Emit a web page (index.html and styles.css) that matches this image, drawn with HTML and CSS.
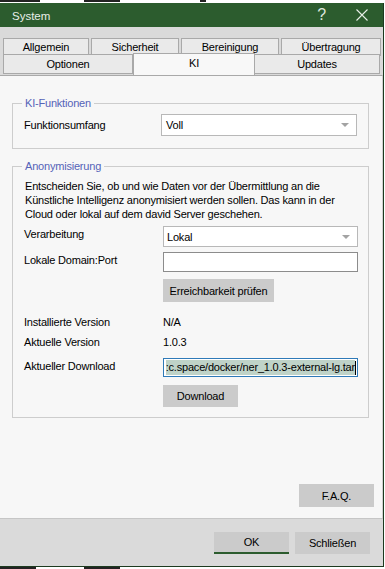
FILE: index.html
```html
<!DOCTYPE html>
<html lang="de">
<head>
  <meta charset="UTF-8">
  <title>System</title>
  <link rel="stylesheet" href="styles.css">
</head>
<body>
  <!-- Reste vom Fenster dahinter -->
  <div class="desk desk-top"><span class="frag f1"></span><span class="frag f2"></span><span class="frag f3"></span></div>

  <div class="window">
    <div class="titlebar">
      <span class="title">System</span>
      <span class="help">?</span>
      <svg class="close" width="12" height="12" viewBox="0 0 12 12"><path d="M0.5 0.5 L11.5 11.5 M11.5 0.5 L0.5 11.5" stroke="#e8eee8" stroke-width="1.1" fill="none"/></svg>
    </div>

    <div class="tabstrip">
      <div class="tabrow">
        <div class="tab t-allg">Allgemein</div>
        <div class="tab t-sich">Sicherheit</div>
        <div class="tab t-ber">Bereinigung</div>
        <div class="tab t-ueb">Übertragung</div>
      </div>
      <div class="tabrow tabrow-2">
        <div class="tab t-opt">Optionen</div>
        <div class="tab t-ki active">KI</div>
        <div class="tab t-upd">Updates</div>
      </div>
    </div>

    <div class="page">
      <fieldset class="group group-ki">
        <legend>KI-Funktionen</legend>
        <div class="row row-ki">
          <label>Funktionsumfang</label>
          <div class="select">Voll<span class="arrow"></span></div>
        </div>
      </fieldset>

      <fieldset class="group group-anon">
        <legend>Anonymisierung</legend>
        <p class="hint">Entscheiden Sie, ob und wie Daten vor der Übermittlung an die<br>Künstliche Intelligenz anonymisiert werden sollen. Das kann in der<br>Cloud oder lokal auf dem david Server geschehen.</p>
        <div class="row r-verarb">
          <label>Verarbeitung</label>
          <div class="select">Lokal<span class="arrow"></span></div>
        </div>
        <div class="row r-domain">
          <label>Lokale Domain:Port</label>
          <div class="input"></div>
        </div>
        <div class="row r-check">
          <span></span>
          <div><button class="btn btn-check">Erreichbarkeit prüfen</button></div>
        </div>
        <div class="row info r-inst">
          <label>Installierte Version</label>
          <span>N/A</span>
        </div>
        <div class="row info">
          <label>Aktuelle Version</label>
          <span>1.0.3</span>
        </div>
        <div class="row r-dl">
          <label>Aktueller Download</label>
          <div class="input focused"><span class="sel">:c.space/docker/ner_1.0.3-external-lg.tar</span><span class="caret"></span></div>
        </div>
        <div class="row r-dlbtn">
          <span></span>
          <div><button class="btn btn-dl">Download</button></div>
        </div>
      </fieldset>

      <div class="faq-line">
        <button class="btn btn-faq">F.A.Q.</button>
      </div>
    </div>

    <div class="footer">
      <button class="btn btn-ok">OK</button>
      <button class="btn">Schließen</button>
    </div>
  </div>

  <div class="desk desk-bottom"><span class="frag f4"></span><span class="frag f5"></span></div>
</body>
</html>
```

FILE: styles.css
```css
* {
  margin: 0;
  padding: 0;
  box-sizing: border-box;
}
body {
  font-family: "Liberation Sans", Arial, sans-serif;
  font-size: 11px;
  letter-spacing: -0.2px;
  color: #000;
  background: #fff;
  width: 385px;
  height: 569px;
  overflow: hidden;
}

/* Hintergrund oben / unten */
.desk {
  position: relative;
  background: #fff;
}
.desk-top {
  height: 3px;
}
.desk-bottom {
  height: 2px;
}
.frag {
  position: absolute;
  height: 2px;
  background: #222;
}
.desk-top .frag { top: 0; }
.desk-bottom .frag { bottom: 0; }
.f1 { left: 0; width: 40px; }
.f2 { left: 84px; width: 36px; }
.f3 { left: 200px; width: 6px; }
.f4 { left: 0; width: 36px; }
.f5 { left: 84px; width: 36px; }

/* Fenster */
.window {
  width: 384px;
  height: 564px;
  border-right: 1px solid #1d3a1f;
  border-bottom: 1px solid #1d3a1f;
  display: flex;
  flex-direction: column;
}
.titlebar {
  height: 24px;
  background: #2c5c2e;
  color: #e8eee8;
  display: flex;
  align-items: center;
  padding-left: 12px;
}
.title {
  font-size: 11.5px;
  letter-spacing: 0;
  flex: 1;
  padding-top: 1px;
}
.help {
  font-size: 16px;
  color: #dfe7df;
  margin-right: 30px;
  padding-bottom: 1px;
}
.close {
  margin-right: 15px;
}

/* Reiter */
.tabstrip {
  height: 48px;
  background: #dadada;
  padding: 11px 0 0 3px;
}
.tabrow {
  display: flex;
  gap: 2px;
  height: 17px;
}
.tabrow-2 {
  gap: 0;
  height: 20px;
}
.tab {
  height: 18px;
  border: 1px solid #a9a9a9;
  background: #eaeaea;
  text-align: center;
  line-height: 16px;
}
.tabrow-2 .tab {
  height: 20px;
  margin-top: -1px;
  line-height: 18px;
}
.t-allg { width: 86px; }
.t-sich { width: 88px; }
.t-ber { width: 98px; }
.t-ueb { width: 100px; }
.t-opt { width: 130px; }
.t-ki { width: 122px; }
.t-upd { width: 125px; border-left: none; }
.tab.active {
  background: #f8f8f8;
  border-bottom: none;
  height: 22px;
  margin-top: -2px;
  line-height: 19px;
  position: relative;
  z-index: 1;
}

/* Seite */
.page {
  height: 443px;
  background: #f7f7f7;
  border-top: 1px solid #a9a9a9;
  border-right: 1px solid #cfcfcf;
  padding-top: 20px;
}
.group {
  width: 357px;
  margin-left: 12px;
  border: 1px solid #cdcdcd;
  padding: 0 9px 0 11px;
}
.group legend {
  margin-left: -2px;
  padding: 0 3px;
  line-height: 14px;
  color: #5563b8;
}
.group-ki {
  padding-top: 4px;
  padding-bottom: 12px;
}
.group-anon {
  margin-top: 10px;
  padding-top: 6px;
  padding-bottom: 10px;
}
.hint {
  line-height: 14px;
  padding-left: 1px;
  white-space: nowrap;
}

.row {
  display: grid;
  grid-template-columns: 139px 195px;
  align-items: start;
}
.row label {
  line-height: 16px;
}
.row-ki {
  grid-template-columns: 137px 196px;
  align-items: center;
}
.r-verarb { margin-top: 5px; }
.r-domain { margin-top: 5px; }
.r-check { margin-top: 7px; }
.r-inst { margin-top: 10px; }
.r-dl { margin-top: 6px; }
.r-dlbtn { margin-top: 8px; }
.info {
  height: 20px;
  align-items: center;
}

.select {
  height: 22px;
  background: #fff;
  border: 1px solid #b8b8b8;
  line-height: 20px;
  padding-left: 4px;
  display: flex;
  align-items: center;
  justify-content: space-between;
  padding-right: 7px;
}
.r-verarb .select {
  height: 21px;
  padding-left: 3px;
}
.arrow {
  width: 0;
  height: 0;
  border-left: 4px solid transparent;
  border-right: 4px solid transparent;
  border-top: 4px solid #a3a3a3;
}
.input {
  height: 20px;
  background: #fff;
  border: 1px solid #8c8c8c;
}
.input.focused {
  height: 19px;
  border-color: #2f7ab8;
  display: flex;
  justify-content: flex-end;
  align-items: center;
  overflow: hidden;
  white-space: nowrap;
  padding: 1px 1px 1px 2px;
}
.sel {
  background: #bfd3c8;
  line-height: 15px;
}
.caret {
  width: 1px;
  height: 14px;
  background: #000;
  flex: none;
}

.btn {
  font-family: inherit;
  font-size: 11px;
  letter-spacing: -0.2px;
  background: #cbcbcb;
  border: none;
  height: 23px;
  color: #000;
}
.btn-check {
  width: 111px;
}
.btn-dl {
  width: 75px;
  height: 22px;
}
.faq-line {
  display: flex;
  justify-content: flex-end;
  margin-top: 66px;
  padding-right: 8px;
}
.btn-faq {
  width: 75px;
}

/* Fußleiste */
.footer {
  flex: 1;
  background: #dadada;
  border-top: 1px solid #c6c6c6;
  display: flex;
  justify-content: flex-end;
  gap: 6px;
  padding: 13px 13px 0 0;
}
.footer .btn {
  width: 75px;
  height: 22px;
}
.btn-ok {
  border-bottom: 2px solid #2c5c2e;
}
```
